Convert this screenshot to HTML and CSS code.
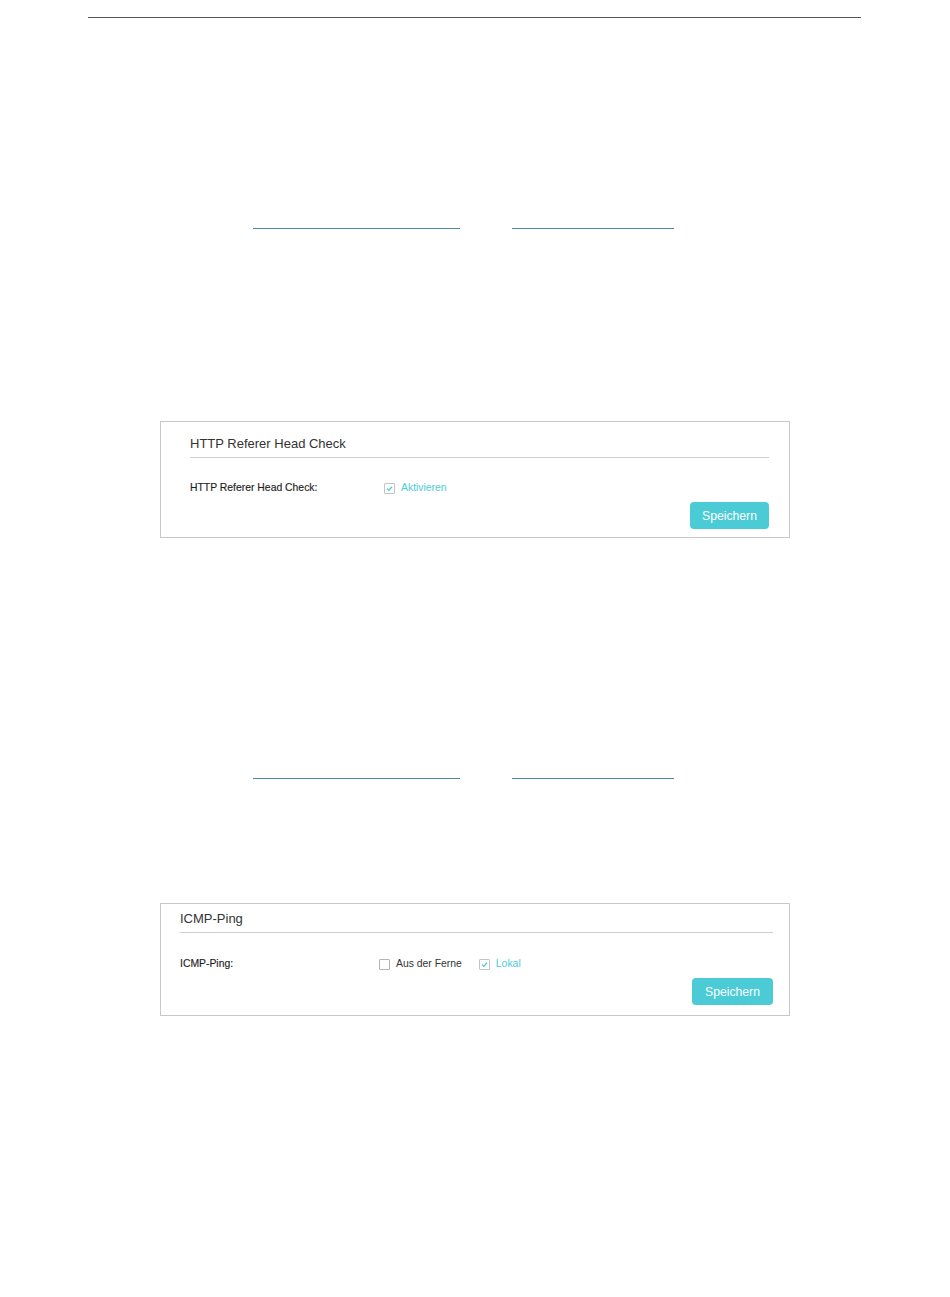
FILE: index.html
```html
<!DOCTYPE html>
<html lang="de">
<head>
  <meta charset="UTF-8">
  <title>Sicherheit – HTTP Referer Head Check / ICMP-Ping</title>
  <link rel="stylesheet" href="styles.css">
</head>
<body>
  <div class="page">
    <div class="top-rule"></div>

    <div class="link-row">
      <span class="link link-a"></span>
      <span class="link link-b"></span>
    </div>

    <div class="panel panel-http">
      <div class="panel-title">HTTP Referer Head Check</div>
      <div class="field">
        <span class="field-label">HTTP Referer Head Check:</span>
        <label class="check on">
          <span class="box"><svg viewBox="0 0 9 9" width="9" height="9"><path d="M2 4.6l1.8 1.8L7 2.8" stroke="#4acbd6" stroke-width="1.3" fill="none"/></svg></span>
          Aktivieren
        </label>
      </div>
      <div class="actions"><button class="save">Speichern</button></div>
    </div>

    <div class="link-row link-row-2">
      <span class="link link-a"></span>
      <span class="link link-b"></span>
    </div>

    <div class="panel panel-icmp">
      <div class="panel-title">ICMP-Ping</div>
      <div class="field">
        <span class="field-label">ICMP-Ping:</span>
        <label class="check">
          <span class="box"></span>
          Aus der Ferne
        </label>
        <label class="check on">
          <span class="box"><svg viewBox="0 0 9 9" width="9" height="9"><path d="M2 4.6l1.8 1.8L7 2.8" stroke="#4acbd6" stroke-width="1.3" fill="none"/></svg></span>
          Lokal
        </label>
      </div>
      <div class="actions"><button class="save">Speichern</button></div>
    </div>
  </div>
</body>
</html>
```

FILE: styles.css
```css
body {
  margin: 0;
  background: #fff;
  font-family: "Liberation Sans", Arial, sans-serif;
  color: #333;
}
.page { width: 950px; height: 1297px; }
.top-rule {
  margin: 17px 0 0 88px;
  width: 773px; height: 1px;
  background: #555;
}
.link-row {
  display: flex; gap: 52px;
  margin-top: 210px; padding-left: 253px;
  height: 1px;
}
.link-row-2 { margin-top: 240px; }
.link { display: block; height: 1px; background: #4d8a9b; }
.link-a { width: 207px; }
.link-b { width: 162px; }

.panel {
  margin-left: 160px;
  border: 1px solid #c8c8c8;
}
.panel-http { margin-top: 192px; padding: 12px 20px 8px 29px; width: 579px; }
.panel-icmp { margin-top: 124px; padding: 5px 16px 10px 19px; width: 593px; }
.panel-title {
  font-size: 13px; line-height: 20px;
  color: #333;
  padding-bottom: 3px;
  border-bottom: 1px solid #cfcfcf;
}
.field {
  display: flex; align-items: center;
  font-size: 10.4px; line-height: 16px;
  margin-top: 22px;
}
.panel-icmp .field { margin-top: 23px; }
.field-label { width: 194px; color: #1e1e1e; -webkit-text-stroke: 0.15px #1e1e1e; }
.panel-icmp .field-label { width: 199px; }
.check { display: flex; align-items: center; gap: 6px; margin-right: 17px; color: #333; }
.check.on { color: #4acbd6; }
.box {
  width: 9px; height: 9px;
  border: 1px solid #b5b5b5; border-radius: 1px;
  display: flex; align-items: center; justify-content: center;
}
.check.on .box { border-color: #c4c4c4; }
.box svg { display: block; }
.actions { display: flex; justify-content: flex-end; margin-top: 6px; }
.save {
  height: 27px; width: 79px;
  border: none; border-radius: 4px;
  background: #4acbd6; color: #fff;
  font-family: "Liberation Sans", Arial, sans-serif;
  font-size: 12.2px; padding: 0;
}
.panel-icmp .save { width: 81px; }
```
